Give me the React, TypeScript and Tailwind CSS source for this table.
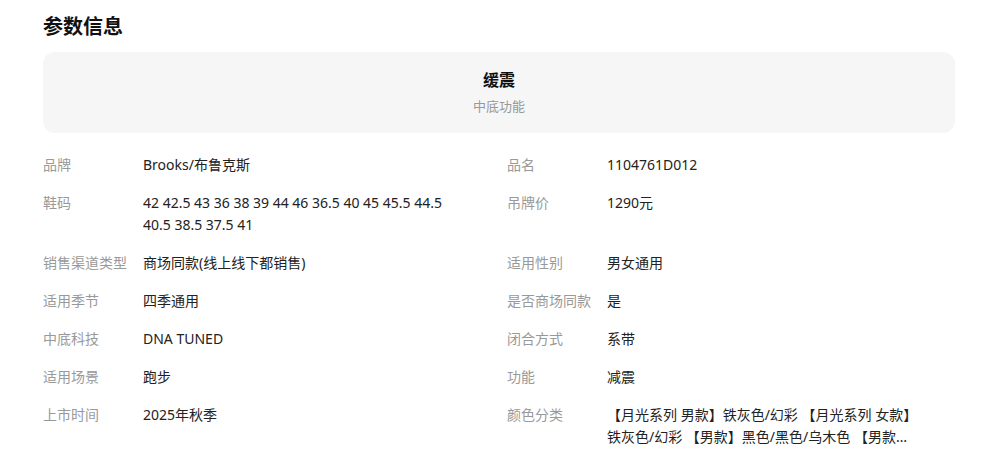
const rows: [string, string, string, string][] = [
  ['品牌', 'Brooks/布鲁克斯', '品名', '1104761D012'],
  ['鞋码', '42 42.5 43 36 38 39 44 46 36.5 40 45 45.5 44.5 40.5 38.5 37.5 41', '吊牌价', '1290元'],
  ['销售渠道类型', '商场同款(线上线下都销售)', '适用性别', '男女通用'],
  ['适用季节', '四季通用', '是否商场同款', '是'],
  ['中底科技', 'DNA TUNED', '闭合方式', '系带'],
  ['适用场景', '跑步', '功能', '减震'],
  [
    '上市时间',
    '2025年秋季',
    '颜色分类',
    '【月光系列 男款】铁灰色/幻彩 【月光系列 女款】铁灰色/幻彩 【男款】黑色/黑色/乌木色 【男款 Glycerin】白色/灰色/蓝色 【女款】白色/粉色',
  ],
];

function Cell({ label, value }: { label: string; value: string }) {
  return (
    <div className="flex text-[14px] leading-[22px]">
      <div className="w-[100px] shrink-0 text-[#999999]">{label}</div>
      <div className="w-[318px] text-[#222222] line-clamp-2">{value}</div>
    </div>
  );
}

export default function App() {
  return (
    <div
      className="w-[984px] h-[476px] bg-white pl-[43px] pr-[29px] pt-[13px] overflow-hidden"
      style={{ fontFamily: '"Noto Sans", "Noto Sans CJK SC", sans-serif' }}
    >
      <h2 className="text-[20px] leading-[28px] font-bold text-[#111111]">参数信息</h2>

      <div className="mt-[11px] h-[81px] rounded-[12px] bg-[#f6f6f6] flex flex-col items-center pt-[17px]">
        <div className="text-[16px] leading-[22px] font-bold text-[#111111]">缓震</div>
        <div className="mt-[5px] text-[13px] leading-[20px] text-[#999999]">中底功能</div>
      </div>

      <div className="mt-[21px] grid grid-cols-[464px_1fr] gap-y-[16px]">
        {rows.map(([l1, v1, l2, v2]) => (
          <>
            <Cell key={l1} label={l1} value={v1} />
            <Cell key={l2} label={l2} value={v2} />
          </>
        ))}
      </div>
    </div>
  );
}
